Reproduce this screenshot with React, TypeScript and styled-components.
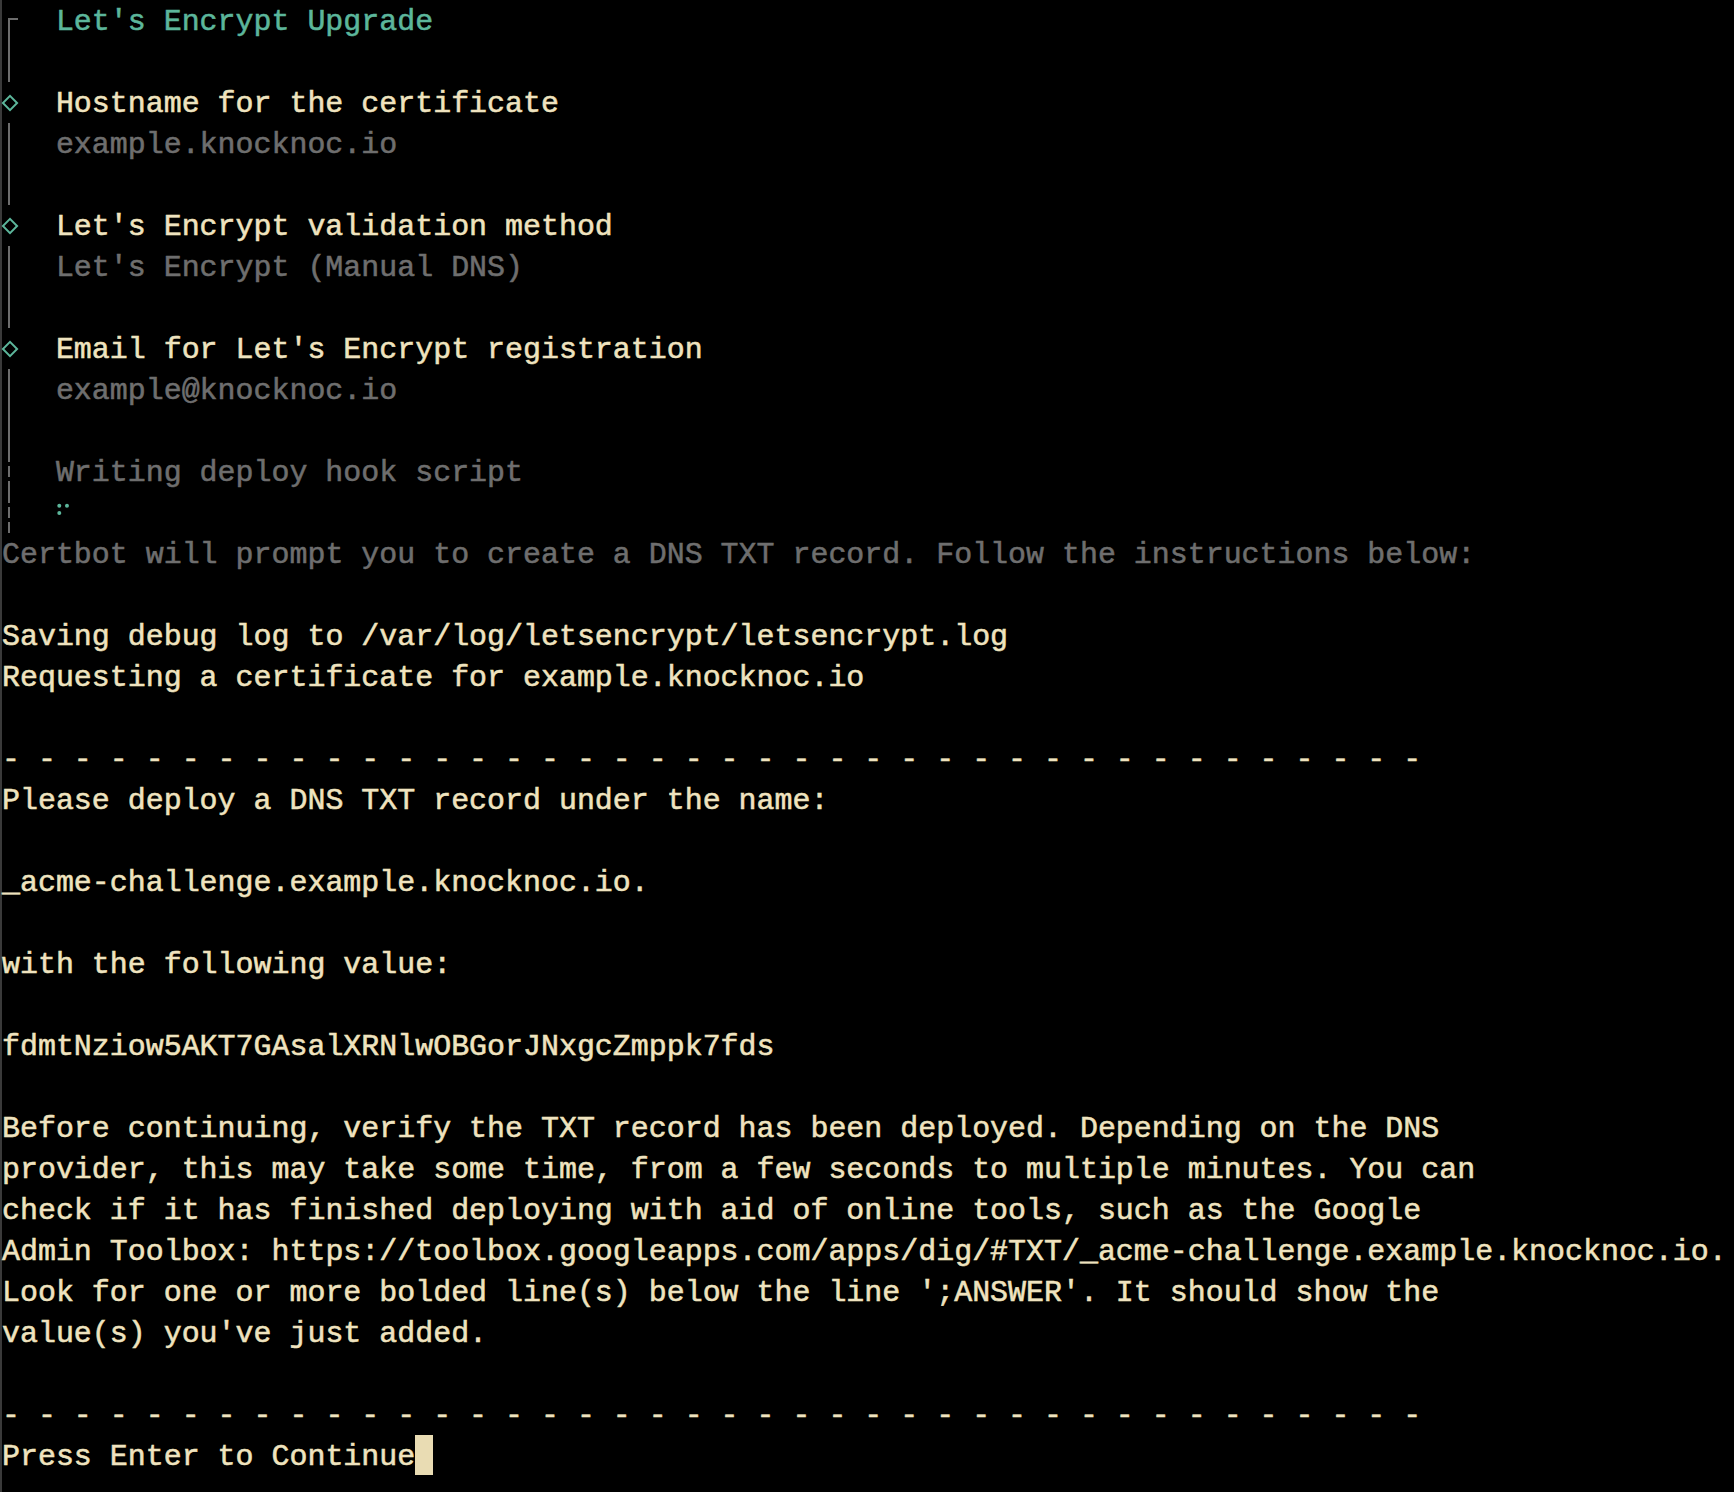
import React from 'react';
import styled, { createGlobalStyle, css } from 'styled-components';

const Global = createGlobalStyle`
  html, body { margin: 0; padding: 0; background: #000; }
  #root { min-height: 100vh; }
`;

const ROW = 41;

const Terminal = styled.main`
  min-height: 100vh;
  box-sizing: border-box;
  border-left: 2px solid #3a3a3a;
  background: #000;
  font-family: "Liberation Mono", "DejaVu Sans Mono", monospace;
  font-size: 29.95px;
  line-height: ${ROW}px;
  color: #efe3bf;
  -webkit-text-stroke: 0.55px currentColor;
`;

type Tone = 'cream' | 'gray' | 'teal';
const toneColor: Record<Tone, string> = {
  cream: '#efe3bf',
  gray: '#6e6e6e',
  teal: '#5cb69b',
};

const Line = styled.div<{ $tone?: Tone }>`
  box-sizing: border-box;
  height: ${ROW}px;
  padding-top: 2px;
  white-space: pre;
  color: ${(p) => toneColor[p.$tone ?? 'cream']};
`;

const PromptRow = styled.div`
  display: flex;
  height: ${ROW}px;
`;

type GutterKind = 'corner' | 'bar' | 'diamond' | 'dashed';

const Gutter = styled.span<{ $kind: GutterKind }>`
  position: relative;
  flex: none;
  width: 3ch;
  height: ${ROW}px;

  ${(p) =>
    p.$kind === 'bar' &&
    css`
      &::before {
        content: '';
        position: absolute;
        left: 6px;
        top: 0;
        bottom: 0;
        width: 2px;
        background: #6c6c6c;
      }
    `}

  ${(p) =>
    p.$kind === 'dashed' &&
    css`
      &::before {
        content: '';
        position: absolute;
        left: 6px;
        top: 0;
        bottom: 0;
        width: 2px;
        background: repeating-linear-gradient(
          to bottom,
          #6c6c6c 0 11px,
          transparent 11px 15px
        );
      }
    `}

  ${(p) =>
    p.$kind === 'corner' &&
    css`
      &::before {
        content: '';
        position: absolute;
        left: 6px;
        top: 18px;
        bottom: 0;
        width: 2px;
        background: #6c6c6c;
      }
      &::after {
        content: '';
        position: absolute;
        left: 6px;
        top: 18px;
        width: 10px;
        height: 2px;
        background: #6c6c6c;
      }
    `}

  ${(p) =>
    p.$kind === 'diamond' &&
    css`
      &::before {
        content: '';
        position: absolute;
        left: 2px;
        top: 14.5px;
        width: 12px;
        height: 12px;
        box-sizing: border-box;
        border: 2px solid #5cb69b;
        transform: rotate(45deg);
      }
    `}
`;

const PromptText = styled.span<{ $tone?: Tone }>`
  padding-top: 2px;
  white-space: pre;
  color: ${(p) => toneColor[p.$tone ?? 'cream']};
`;

const SpinnerCell = styled.span`
  display: inline-flex;
  width: 1ch;
  height: ${ROW}px;
`;

const Cursor = styled.span`
  display: inline-block;
  width: 1ch;
  height: 40px;
  margin-top: -2px;
  vertical-align: top;
  background: #e9dcb3;
`;

const Spinner = () => (
  <SpinnerCell>
    <svg width="18" height="41" viewBox="0 0 18 41" aria-hidden>
      <circle cx="3.3" cy="13.7" r="2" fill="#5cb69b" />
      <circle cx="11" cy="13.7" r="2" fill="#5cb69b" />
      <circle cx="3.3" cy="21" r="2" fill="#5cb69b" />
    </svg>
  </SpinnerCell>
);

const Prompt: React.FC<{ kind: GutterKind; tone?: Tone; children?: React.ReactNode }> = ({
  kind,
  tone,
  children,
}) => (
  <PromptRow>
    <Gutter $kind={kind} />
    {children !== undefined && <PromptText $tone={tone}>{children}</PromptText>}
  </PromptRow>
);

const DASHES = '- '.repeat(39) + '-';

export default function App() {
  return (
    <>
      <Global />
      <Terminal>
        <Prompt kind="corner" tone="teal">Let's Encrypt Upgrade</Prompt>
        <Prompt kind="bar" />
        <Prompt kind="diamond">Hostname for the certificate</Prompt>
        <Prompt kind="bar" tone="gray">example.knocknoc.io</Prompt>
        <Prompt kind="bar" />
        <Prompt kind="diamond">Let's Encrypt validation method</Prompt>
        <Prompt kind="bar" tone="gray">Let's Encrypt (Manual DNS)</Prompt>
        <Prompt kind="bar" />
        <Prompt kind="diamond">Email for Let's Encrypt registration</Prompt>
        <Prompt kind="bar" tone="gray">example@knocknoc.io</Prompt>
        <Prompt kind="bar" />
        <Prompt kind="dashed" tone="gray">Writing deploy hook script</Prompt>
        <PromptRow>
          <Gutter $kind="dashed" />
          <Spinner />
        </PromptRow>
        <Line $tone="gray">Certbot will prompt you to create a DNS TXT record. Follow the instructions below:</Line>
        <Line />
        <Line>Saving debug log to /var/log/letsencrypt/letsencrypt.log</Line>
        <Line>Requesting a certificate for example.knocknoc.io</Line>
        <Line />
        <Line>{DASHES}</Line>
        <Line>Please deploy a DNS TXT record under the name:</Line>
        <Line />
        <Line>_acme-challenge.example.knocknoc.io.</Line>
        <Line />
        <Line>with the following value:</Line>
        <Line />
        <Line>fdmtNziow5AKT7GAsalXRNlwOBGorJNxgcZmppk7fds</Line>
        <Line />
        <Line>Before continuing, verify the TXT record has been deployed. Depending on the DNS</Line>
        <Line>provider, this may take some time, from a few seconds to multiple minutes. You can</Line>
        <Line>check if it has finished deploying with aid of online tools, such as the Google</Line>
        <Line>Admin Toolbox: https://toolbox.googleapps.com/apps/dig/#TXT/_acme-challenge.example.knocknoc.io.</Line>
        <Line>Look for one or more bolded line(s) below the line ';ANSWER'. It should show the</Line>
        <Line>value(s) you've just added.</Line>
        <Line />
        <Line>{DASHES}</Line>
        <Line>
          Press Enter to Continue
          <Cursor />
        </Line>
      </Terminal>
    </>
  );
}
